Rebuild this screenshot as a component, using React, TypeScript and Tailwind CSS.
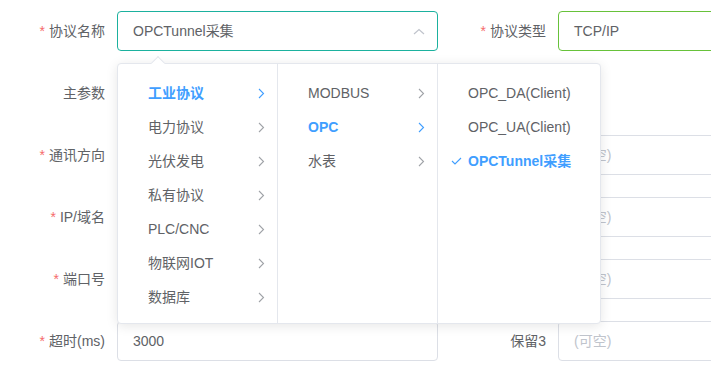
import React from "react";

const font = { fontFamily: '"Liberation Sans", "Noto Sans CJK SC", Arial, sans-serif' };

function Chevron({ active }: { active?: boolean }) {
  return (
    <svg width="7" height="11" viewBox="0 0 7 11" className="shrink-0">
      <path d="M1 1 L5.5 5.5 L1 10" fill="none" stroke={active ? "#409eff" : "#a0a3a8"} strokeWidth="1.1" />
    </svg>
  );
}

function Label({ text, req, wide }: { text: string; req?: boolean; wide?: boolean }) {
  return (
    <div
      className={
        (wide ? "w-[120px]" : "w-[117px]") +
        " shrink-0 pr-[12px] text-right text-[14px] leading-[40px] text-[#606266]"
      }
    >
      {req && <span className="text-[#f56c6c] mr-[4px]">*</span>}
      {text}
    </div>
  );
}

function Input({ value, placeholder, border = "#dcdfe6", children }: { value?: string; placeholder?: string; border?: string; children?: React.ReactNode }) {
  return (
    <div
      className="relative w-[321px] h-[40px] shrink-0 rounded-[4px] border bg-white px-[15px] flex items-center text-[14px]"
      style={{ borderColor: border }}
    >
      {value ? <span className="text-[#606266]">{value}</span> : <span className="text-[#c0c4cc]">{placeholder}</span>}
      {children}
    </div>
  );
}

function Row({ children }: { children: React.ReactNode }) {
  return <div className="flex h-[40px] mb-[22px]">{children}</div>;
}

const col1 = ["工业协议", "电力协议", "光伏发电", "私有协议", "PLC/CNC", "物联网IOT", "数据库"];
const col2 = ["MODBUS", "OPC", "水表"];
const col3 = ["OPC_DA(Client)", "OPC_UA(Client)", "OPCTunnel采集"];

export default function App() {
  return (
    <div className="relative w-[711px] h-[365px] overflow-hidden bg-white" style={font}>
      <div className="pt-[11px]">
        <Row>
          <Label text="协议名称" req />
          <Input value="OPCTunnel采集" border="#1bb19e">
            <svg width="12" height="7" viewBox="0 0 12 7" className="absolute right-[12px] top-[16px]">
              <path d="M1 6 L6 1.5 L11 6" fill="none" stroke="#c0c4cc" strokeWidth="1.2" />
            </svg>
          </Input>
          <Label text="协议类型" req wide />
          <Input value="TCP/IP" border="#67c23a" />
        </Row>
        <Row>
          <Label text="主参数" />
          <Input placeholder="" />
        </Row>
        <Row>
          <Label text="通讯方向" req />
          <Input placeholder="" />
          <Label text="站号" wide />
          <Input placeholder="(可空)" />
        </Row>
        <Row>
          <Label text="IP/域名" req />
          <Input placeholder="" />
          <Label text="保留1" wide />
          <Input placeholder="(可空)" />
        </Row>
        <Row>
          <Label text="端口号" req />
          <Input placeholder="" />
          <Label text="保留2" wide />
          <Input placeholder="(可空)" />
        </Row>
        <Row>
          <Label text="超时(ms)" req />
          <Input value="3000" />
          <Label text="保留3" wide />
          <Input placeholder="(可空)" />
        </Row>
      </div>

      {/* Cascader dropdown */}
      <div className="absolute left-[117px] top-[63px] flex h-[261px] rounded-[4px] border border-[#e4e7ed] bg-white shadow-[0_2px_12px_0_rgba(0,0,0,0.1)]">
        <div className="absolute left-[35px] top-[-6px] w-[10px] h-[10px] rotate-45 bg-white border-l border-t border-[#e4e7ed]" />
        <div className="w-[160px] border-r border-[#e4e7ed] pt-[12px]">
          {col1.map((t, i) => (
            <div key={t} className="flex items-center h-[34px] pl-[30px] pr-[12px] text-[14px]">
              <span className={"flex-1 " + (i === 0 ? "text-[#409eff] font-bold" : "text-[#606266]")}>{t}</span>
              <Chevron active={i === 0} />
            </div>
          ))}
        </div>
        <div className="w-[160px] border-r border-[#e4e7ed] pt-[12px]">
          {col2.map((t, i) => (
            <div key={t} className="flex items-center h-[34px] pl-[30px] pr-[12px] text-[14px]">
              <span className={"flex-1 " + (i === 1 ? "text-[#409eff] font-bold" : "text-[#606266]")}>{t}</span>
              <Chevron active={i === 1} />
            </div>
          ))}
        </div>
        <div className="w-[162px] pt-[12px]">
          {col3.map((t, i) => (
            <div key={t} className="relative flex items-center h-[34px] pl-[30px] pr-[12px] text-[14px]">
              {i === 2 && (
                <svg width="11" height="8" viewBox="0 0 11 8" className="absolute left-[13px] top-[13px]">
                  <path d="M1 4 L4 7 L10 1" fill="none" stroke="#409eff" strokeWidth="1.1" />
                </svg>
              )}
              <span className={i === 2 ? "text-[#409eff] font-bold" : "text-[#606266]"}>{t}</span>
            </div>
          ))}
        </div>
      </div>
    </div>
  );
}
